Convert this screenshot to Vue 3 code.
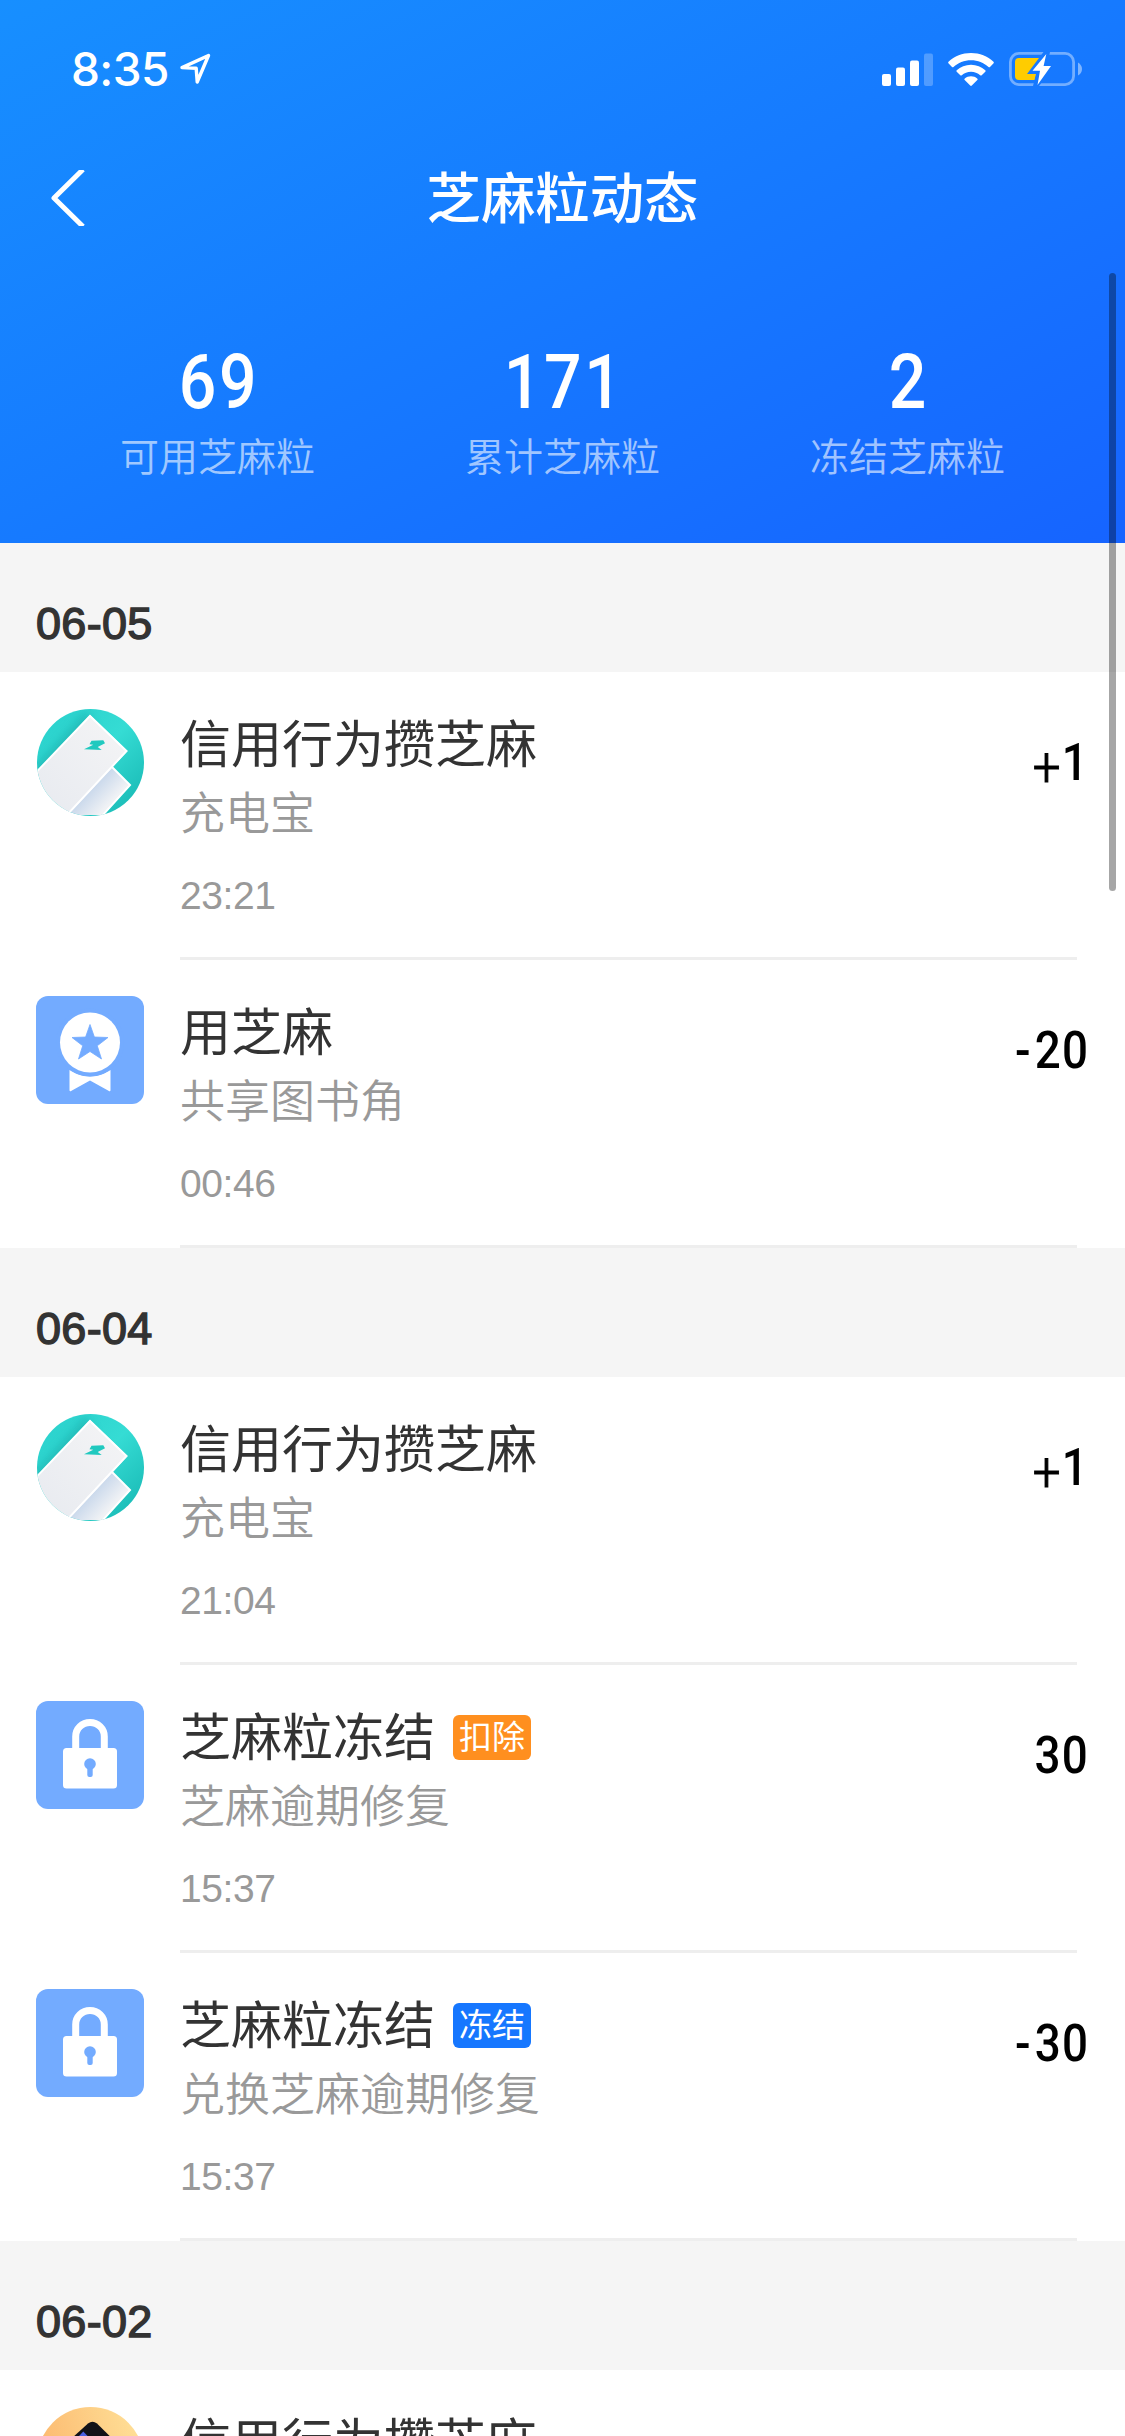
<template>
    <div class="page">
        <header class="header">
            <div class="status-bar">
                <div class="status-left">
                    <span class="clock">8:35</span>
                    <svg class="location" viewBox="0 0 32 32" fill="none">
                        <path d="M3 14.6 29.5 2.5 18.2 29 17.2 15.3Z" stroke="#fff" stroke-width="3.4" stroke-linejoin="round" />
                    </svg>
                </div>
                <div class="status-right">
                    <svg class="signal" viewBox="0 0 51 33" fill="#fff">
                        <rect x="0" y="21" width="9" height="12" rx="2" />
                        <rect x="14" y="14.5" width="9" height="18.5" rx="2" />
                        <rect x="28" y="7.5" width="9" height="25.5" rx="2" />
                        <rect x="42" y="0.5" width="9" height="32.5" rx="2" opacity="0.25" />
                    </svg>
                    <svg class="wifi" viewBox="0 0 46 33" fill="#fff">
                        <path d="M23 0C31.7 0 39.6 3.3 45.5 8.8 46 9.3 46 9.8 45.6 10.3L42 13.9C41.5 14.4 41 14.4 40.5 13.9 35.9 9.7 29.8 7.2 23 7.2S10.1 9.7 5.5 13.9C5 14.4 4.5 14.4 4 13.9L.4 10.3C0 9.8 0 9.3 .5 8.8 6.4 3.3 14.3 0 23 0Z" />
                        <path d="M23 11.7C28.5 11.7 33.5 13.8 37.3 17.2 37.8 17.7 37.8 18.2 37.3 18.7L33.7 22.3C33.2 22.7 32.7 22.7 32.2 22.3 29.8 20.1 26.5 18.8 23 18.8S16.2 20.1 13.8 22.3C13.3 22.7 12.8 22.7 12.3 22.3L8.7 18.7C8.2 18.2 8.2 17.7 8.7 17.2 12.5 13.8 17.5 11.7 23 11.7Z" />
                        <path d="M23 23.3C25.4 23.3 27.5 24.1 29.2 25.5 29.8 26 29.8 26.5 29.3 27L23.8 32.5C23.3 33 22.7 33 22.2 32.5L16.7 27C16.2 26.5 16.2 26 16.8 25.5 18.5 24.1 20.6 23.3 23 23.3Z" />
                    </svg>
                    <svg class="battery" viewBox="0 0 74 34">
                        <defs>
                            <mask id="bolt-gap">
                                <rect width="74" height="34" fill="#fff" />
                                <path d="M34.5 0 18 22H27L24 34H30L45 14H38L41 0Z" fill="#000" />
                            </mask>
                        </defs>
                        <g mask="url(#bolt-gap)">
                            <rect x="1.4" y="1.4" width="63.2" height="31.2" rx="8.5" fill="none" stroke="#fff" stroke-opacity="0.4" stroke-width="2.8" />
                            <path d="M10 6H31L26 28H10Q6 28 6 24V10Q6 6 10 6Z" fill="#fc0" />
                        </g>
                        <path d="M69 10.5Q73 13 73 17T69 23.5Z" fill="#fff" fill-opacity="0.45" />
                        <path d="M37.3 2 23.5 18.7H31L28.5 33 42 14H34.6Z" fill="#fff" />
                    </svg>
                </div>
            </div>

            <nav class="nav">
                <svg class="back" viewBox="0 0 34 56" fill="none">
                    <path d="M32 -0.5 3 28 32 56.5" stroke="#fff" stroke-width="5" stroke-linejoin="round" />
                </svg>
                <h1 class="nav-title">芝麻粒动态</h1>
            </nav>

            <div class="stats">
                <div v-for="stat in stats" :key="stat.label" class="stat">
                    <span class="stat-value">{{ stat.value }}</span>
                    <span class="stat-label">{{ stat.label }}</span>
                </div>
            </div>
        </header>

        <section v-for="group in groups" :key="group.date">
            <h2 class="date">{{ group.date }}</h2>
            <div v-for="(item, i) in group.items" :key="i" class="row">
                <svg v-if="item.icon === 'power'" class="icon round" viewBox="0 0 108 108">
                    <defs>
                        <linearGradient id="teal" x1="0" y1="0" x2="1" y2="1">
                            <stop offset="0" stop-color="#28cfcb" />
                            <stop offset="0.5" stop-color="#35dcd4" />
                            <stop offset="1" stop-color="#14b4b0" />
                        </linearGradient>
                        <linearGradient id="bank" x1="0" y1="1" x2="1" y2="0">
                            <stop offset="0" stop-color="#e6e9ef" />
                            <stop offset="1" stop-color="#f5f5f6" />
                        </linearGradient>
                        <linearGradient id="bank-back" gradientUnits="userSpaceOnUse" x1="60" y1="78" x2="76" y2="93">
                            <stop offset="0" stop-color="#ccdaec" />
                            <stop offset="1" stop-color="#f0f2f5" />
                        </linearGradient>
                        <filter id="soft" x="-20%" y="-20%" width="140%" height="140%">
                            <feGaussianBlur stdDeviation="4" />
                        </filter>
                    </defs>
                    <rect width="108" height="108" fill="url(#teal)" />
                    <path d="M-4 62 50 3 60 20 20 90Z" fill="#0a8f92" opacity="0.35" filter="url(#soft)" />
                    <path d="M76 59 94.5 77 67 107H20Z" fill="url(#bank-back)" />
                    <path d="M76 59 94 77 66 108" fill="none" stroke="#fff" stroke-width="2" />
                    <path d="M54 7 91.5 43 30 109H-12V78Z" fill="url(#bank)" />
                    <path d="M-12 77 54 8 90.5 43 29 109" fill="none" stroke="#fff" stroke-width="2" />
                    <path d="M55.5 32.7 67.3 32.3 69 35.3 61.7 39 65.7 42 48 41.3 57.3 36.7 53.5 36.3Z" fill="#20c9bf" />
                </svg>
                <svg v-else-if="item.icon === 'medal'" class="icon" viewBox="0 0 108 108">
                    <rect width="108" height="108" fill="#73abff" />
                    <path d="M33.5 74Q54 87 74.5 74V94Q74.5 96 72.5 94.7L54 84.5 35.5 94.7Q33.5 96 33.5 94Z" fill="#fff" />
                    <circle cx="54" cy="46.5" r="34" fill="#73abff" />
                    <circle cx="54" cy="46.5" r="30" fill="#fff" />
                    <path d="M54 28.5 58.4 41 72 41.5 61.3 49.8 65.5 63 54 55.5 42.5 63 46.7 49.8 36 41.5 49.6 41Z" fill="#73abff" stroke="#73abff" stroke-width="0.8" stroke-linejoin="round" />
                </svg>
                <svg v-else-if="item.icon === 'lock'" class="icon" viewBox="0 0 108 108">
                    <rect width="108" height="108" fill="#73abff" />
                    <path d="M39.7 50V35.5A14.3 14 0 0 1 68.3 35.5V50" fill="none" stroke="#fff" stroke-width="7" />
                    <rect x="27" y="47" width="54" height="40.5" rx="3.5" fill="#fff" />
                    <circle cx="54" cy="63" r="5.8" fill="#73abff" />
                    <rect x="51.3" y="65" width="5.4" height="11" rx="2" fill="#73abff" />
                </svg>
                <svg v-else class="icon round" viewBox="0 0 108 108">
                    <defs>
                        <linearGradient id="amber" x1="0" y1="0.3" x2="1" y2="0">
                            <stop offset="0" stop-color="#fcb96f" />
                            <stop offset="1" stop-color="#ffe39b" />
                        </linearGradient>
                    </defs>
                    <rect width="108" height="108" fill="url(#amber)" />
                    <path d="M52 17.5Q56.5 14 61 17.5L98 54 54 104 14 52Z" fill="#121218" />
                    <path d="M47.3 25.5 78 58 50 88 22 52Z" fill="#4a5fe0" />
                </svg>

                <div class="body">
                    <div class="title">
                        <span class="title-text">{{ item.title }}</span>
                        <span v-if="item.tag" class="tag" :class="'tag-' + item.tagType">{{ item.tag }}</span>
                    </div>
                    <div class="sub">{{ item.sub }}</div>
                    <div class="time">{{ item.time }}</div>
                </div>
                <div class="amount">
                    <span v-if="item.sign" :class="item.sign === '+' ? 'plus' : 'minus'">{{ item.sign }}</span>
                    <span>{{ item.amount }}</span>
                </div>
            </div>
        </section>

        <div class="scrollbar"></div>
    </div>
</template>

<script setup>
const stats = [
    { value: 69,  label: '可用芝麻粒' },
    { value: 171, label: '累计芝麻粒' },
    { value: 2,   label: '冻结芝麻粒' },
];

const groups = [
    {
        date: '06-05',
        items: [
            { icon: 'power', title: '信用行为攒芝麻', sub: '充电宝',     time: '23:21', sign: '+', amount: 1 },
            { icon: 'medal', title: '用芝麻',         sub: '共享图书角', time: '00:46', sign: '-', amount: 20 },
        ],
    },
    {
        date: '06-04',
        items: [
            { icon: 'power', title: '信用行为攒芝麻', sub: '充电宝', time: '21:04', sign: '+', amount: 1 },
            { icon: 'lock', title: '芝麻粒冻结', tag: '扣除', tagType: 'deduct', sub: '芝麻逾期修复',     time: '15:37', sign: '',  amount: 30 },
            { icon: 'lock', title: '芝麻粒冻结', tag: '冻结', tagType: 'freeze', sub: '兑换芝麻逾期修复', time: '15:37', sign: '-', amount: 30 },
        ],
    },
    {
        date: '06-02',
        items: [
            { icon: 'phone', title: '信用行为攒芝麻' },
        ],
    },
];
</script>

<style>
body {
    margin: 0;
    background: #fff;
}
</style>

<style scoped>
.page {
    position: relative;
    width: 1125px;
    height: 2436px;
    overflow: hidden;
    background: #fff;
    font-family: "Liberation Sans", "Noto Sans CJK SC", sans-serif;
}
.header {
    height: 543px;
    background: linear-gradient(154deg, #178fff 0%, #167aff 50%, #1664ff 100%);
    color: #fff;
}
.status-bar {
    display: flex;
    justify-content: space-between;
    height: 138px;
    padding: 0 42px 0 71px;
    box-sizing: border-box;
}
.status-left {
    display: flex;
    align-items: center;
}
.clock {
    width: 108px;
    font: 550 46px/138px Inter, sans-serif;
    letter-spacing: -.6px;
}
.location {
    width: 32px;
    height: 32px;
}
.status-right {
    display: flex;
    align-items: center;
}
.signal {
    width: 51px;
    height: 33px;
}
.wifi {
    width: 46px;
    height: 33px;
    margin-left: 15px;
}
.battery {
    width: 74px;
    height: 34px;
    margin-left: 15px;
}
.nav {
    display: grid;
    grid-template-columns: 120px 1fr 120px;
    align-items: center;
    height: 120px;
}
.back {
    width: 34px;
    height: 56px;
    margin-left: 51px;
}
.nav-title {
    margin: 0;
    padding-bottom: 6px;
    text-align: center;
    font: 500 54.4px/80px "Noto Sans CJK SC", sans-serif;
}
.stats {
    display: grid;
    grid-template-columns: repeat(3, 345px);
    padding: 84px 45px 0;
}
.stat {
    display: flex;
    flex-direction: column;
    align-items: center;
}
.stat-value {
    padding-left: 3px;
    font: 500 76px/80px Roboto, sans-serif;
    letter-spacing: 3px;
    transform: scaleX(.87);
}
.stat-label {
    margin-top: 7px;
    font: 350 39px/50px "Noto Sans CJK SC", sans-serif;
    color: rgba(255,255,255,.6);
}
.date {
    height: 129px;
    margin: 0;
    padding: 25px 36px 0;
    box-sizing: border-box;
    background: #f5f5f5;
    color: #333;
    font-size: 45px;
    font-weight: 400;
    line-height: 112px;
    letter-spacing: .3px;
    -webkit-text-stroke: 1.4px #333;
}
.row {
    position: relative;
    display: flex;
    height: 288px;
    padding: 36px 36px 0;
    box-sizing: border-box;
}
.row::after {
    content: '';
    position: absolute;
    left: 180px;
    right: 48px;
    bottom: 0;
    height: 3px;
    background: #eee;
}
.icon {
    flex: none;
    width: 108px;
    height: 108px;
    border-radius: 12px;
}
.round { clip-path: circle(53.5px at 54.5px 54.5px); }
.body {
    flex: 1;
    margin-left: 36px;
}
.title {
    display: flex;
    align-items: center;
    gap: 18px;
    height: 72px;
    color: #333;
    white-space: nowrap;
}
.title-text {
    padding-top: 3px;
    font-size: 51px;
    line-height: 66px;
}
.tag {
    width: 78px;
    height: 45px;
    border-radius: 6px;
    color: #fff;
    font-size: 33px;
    line-height: 46px;
    text-align: center;
}
.tag-deduct { background: #ff8f1f; }
.tag-freeze { background: #1677ff; }
.sub {
    height: 64px;
    font-family: "Noto Sans CJK SC", sans-serif;
    font-size: 45px;
    font-weight: 350;
    line-height: 61px;
    color: #999;
}
.time {
    margin-top: 28px;
    font-size: 39px;
    line-height: 48px;
    letter-spacing: -.4px;
    color: #999;
}
.amount {
    display: flex;
    height: 108px;
    font: 500 52px/110px Roboto, sans-serif;
    letter-spacing: 1.5px;
    color: #000;
    transform: scaleX(.88);
    transform-origin: right;
}
.plus {
    padding-top: 4px;
    font-size: 56px;
    font-weight: 300;
    -webkit-text-stroke: 1px #000;
}
.minus { margin-right: 3px; }
.scrollbar {
    position: absolute;
    top: 273px;
    right: 9px;
    width: 7px;
    height: 618px;
    border-radius: 4px;
    background: rgba(0,0,0,.35);
}
</style>
